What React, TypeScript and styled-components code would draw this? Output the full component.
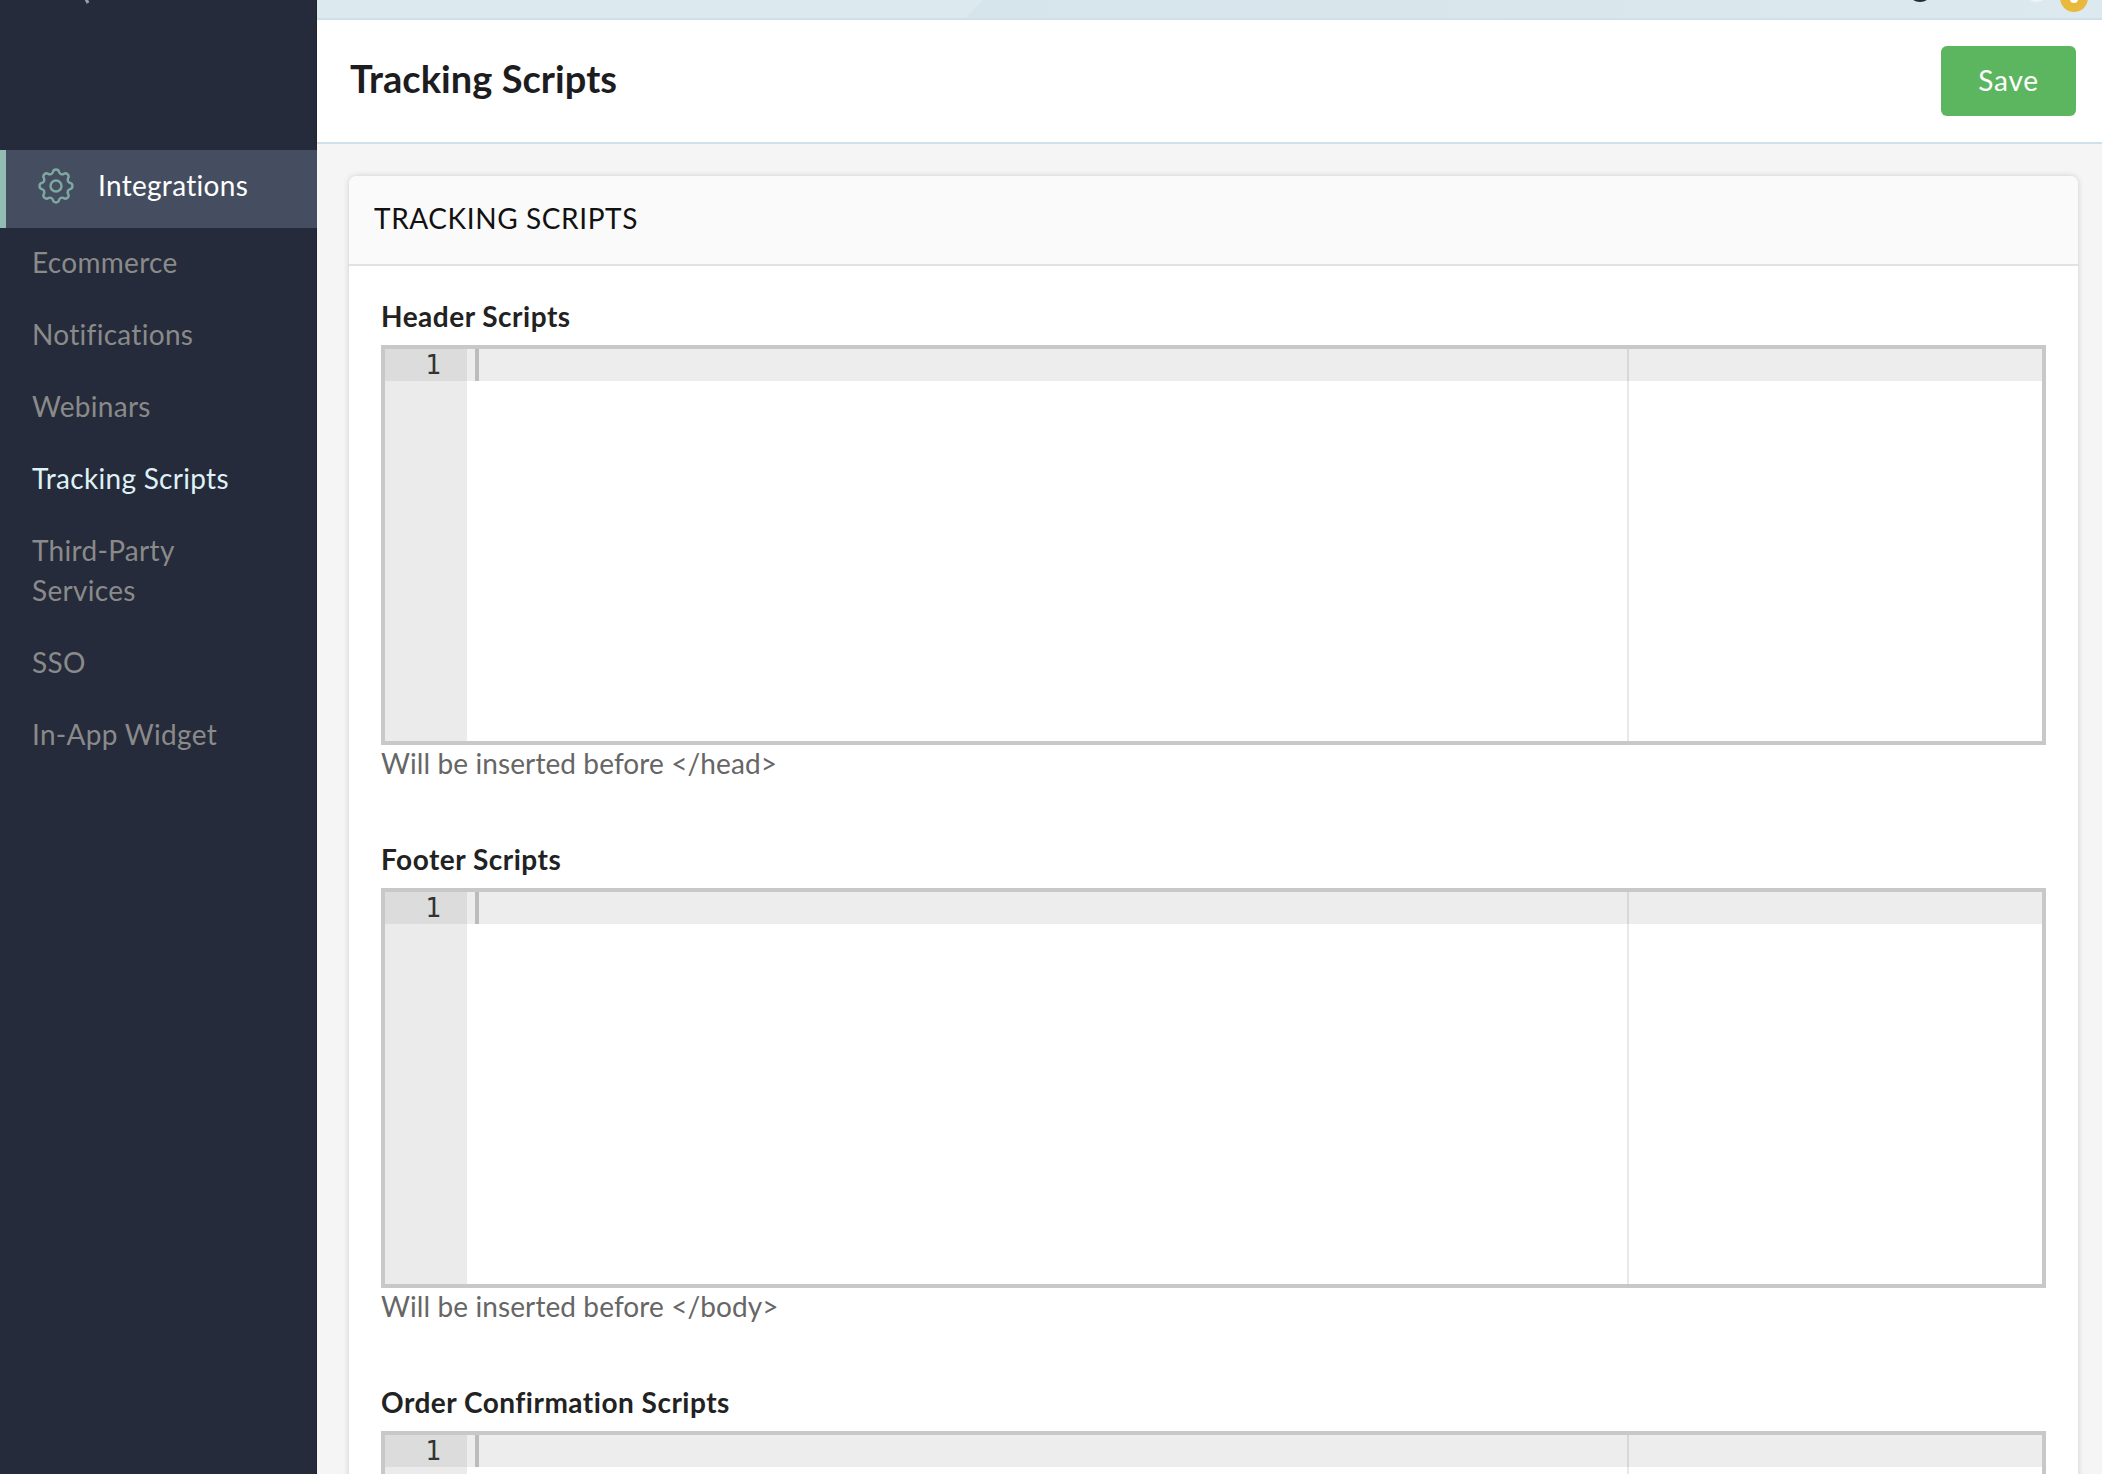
import React from 'react';
import styled, { createGlobalStyle } from 'styled-components';
import { HiOutlineCog } from 'react-icons/hi';

const Global = createGlobalStyle`
  html, body { margin: 0; padding: 0; height: 100%; overflow: hidden; background: #f5f5f5; }
  * { box-sizing: border-box; }
  body { font-family: Lato, "Open Sans", sans-serif; font-variant-ligatures: none; }
`;

const Shell = styled.div`
  display: flex;
  width: 2102px;
  height: 1474px;
  overflow: hidden;
`;

const Sidebar = styled.aside`
  flex: 0 0 317px;
  background: #252b3a;
  border-right: 1px solid #1f2431;
  display: flex;
  flex-direction: column;
  position: relative;
`;

const SidebarTopGlyph = styled.div`
  height: 150px;
  display: flex;
  padding-left: 80px;
  overflow: hidden;
  align-items: flex-start;
  svg { margin-top: -15px; display: block; }
`;

const ActiveItem = styled.div`
  display: flex;
  align-items: center;
  height: 78px;
  background: #454e60;
  border-left: 6px solid #93bdb2;
  padding: 0 0 9px 28px;
  color: #fff;
  font-size: 28px;
  letter-spacing: 0.3px;
  gap: 20px;
  margin-right: -0.5px;
  svg { width: 44px; height: 44px; color: #7fa9a0; stroke-width: 1.3; flex: none; margin-top: 3px; }
`;

const NavItem = styled.div<{ $current?: boolean }>`
  padding: 14px 32px 18px;
  line-height: 40px;
  font-size: 28px;
  letter-spacing: 0.3px;
  color: ${p => (p.$current ? '#dff0f6' : '#8a8a8a')};
`;

const Main = styled.main`
  flex: 1;
  min-width: 0;
  display: flex;
  flex-direction: column;
`;

const TopBar = styled.div`
  height: 20px;
  flex: none;
  background: #dce9ef;
  border-bottom: 2px solid #d0dfe8;
  position: relative;
  overflow: hidden;
  &::before {
    content: '';
    position: absolute;
    inset: 0;
    background: linear-gradient(to right, #d3e4ea 0%, #d6e5eb 40%, #dce9ef 100%);
    clip-path: polygon(666px 0, 100% 0, 100% 100%, 649px 100%);
  }
`;

const Avatar = styled.span`
  position: absolute;
  left: 1590px;
  top: -24px;
  width: 26px;
  height: 26px;
  border-radius: 50%;
  background: #252b3a;
`;

const WhiteDisc = styled.span`
  position: absolute;
  left: 1706px;
  top: -28px;
  width: 27px;
  height: 30px;
  border-radius: 50%;
  background: #eef3f6;
`;

const Badge = styled.span`
  position: absolute;
  left: 1743px;
  top: -16px;
  width: 28px;
  height: 28px;
  border-radius: 50%;
  background: #e9b93e;
  &::after {
    content: '';
    position: absolute;
    left: 10px;
    top: 11px;
    width: 8px;
    height: 8px;
    border-radius: 50%;
    background: #fff;
  }
`;

const PageHeader = styled.header`
  height: 124px;
  flex: none;
  background: #fff;
  border-bottom: 2px solid #d0e0ea;
  display: flex;
  align-items: center;
  justify-content: space-between;
  padding: 0 26px 0 33px;
`;

const PageTitle = styled.h1`
  margin: 0;
  padding-bottom: 6px;
  font-size: 38px;
  font-weight: 700;
  letter-spacing: 0.05px;
  color: #1d1d1f;
`;

const SaveButton = styled.button`
  width: 135px;
  height: 70px;
  border: none;
  border-radius: 6px;
  background: #5cb660;
  color: #fff;
  font: 400 28px Lato, sans-serif;
  letter-spacing: 0.7px;
  padding: 0 0 2px;
`;

const Content = styled.div`
  flex: 1;
  min-height: 0;
  padding: 32px 24px 0 32px;
`;

const Card = styled.section`
  background: #fff;
  border-radius: 8px;
  box-shadow: 0 0 6px rgba(0, 0, 0, 0.16);
`;

const CardHead = styled.div`
  height: 90px;
  background: #fafafa;
  border-bottom: 2px solid #e0e3e6;
  border-radius: 8px 8px 0 0;
  padding: 0 25px 4px;
  display: flex;
  align-items: center;
  font-size: 28px;
  letter-spacing: 0.6px;
  color: #111;
`;

const CardBody = styled.div`
  padding: 30px 32px 0;
`;

const Field = styled.div`
  margin-bottom: 58px;
`;

const Label = styled.label`
  display: block;
  font-size: 28px;
  letter-spacing: 0.5px;
  line-height: 40px;
  font-weight: 700;
  color: #222;
  margin-bottom: 9px;
`;

const Editor = styled.div`
  height: 400px;
  border: 4px solid #c8c8c8;
  display: flex;
  background: #fff;
  position: relative;
`;

const Gutter = styled.div`
  width: 82px;
  flex: none;
  background: #ebebeb;
`;

const GutterCell = styled.div`
  height: 32px;
  background: #dcdcdc;
  color: #333;
  font: 400 26px/32px "DejaVu Sans Mono", monospace;
  text-align: right;
  padding-right: 26px;
`;

const Surface = styled.div`
  flex: 1;
  min-width: 0;
  position: relative;
`;

const ActiveLine = styled.div`
  height: 32px;
  background: #ededed;
  padding-left: 8px;
`;

const Cursor = styled.div`
  width: 4px;
  height: 32px;
  background: #bcbcbc;
`;

const PrintMargin = styled.div`
  position: absolute;
  left: 1160px;
  top: 0;
  bottom: 0;
  width: 2px;
  background: rgba(0, 0, 0, 0.09);
`;

const Help = styled.div`
  font-size: 28px;
  letter-spacing: 0.1px;
  line-height: 36px;
  color: #666;
`;

const navItems = ['Ecommerce', 'Notifications', 'Webinars', 'Tracking Scripts', 'Third-Party Services', 'SSO', 'In-App Widget'];
const fields = [
  { label: 'Header Scripts', help: 'Will be inserted before </head>' },
  { label: 'Footer Scripts', help: 'Will be inserted before </body>' },
  { label: 'Order Confirmation Scripts', help: '' },
];

export default function App() {
  return (
    <Shell>
      <Global />
      <Sidebar>
        <SidebarTopGlyph>
          <svg width="12" height="20" viewBox="0 0 12 20"><path d="M3 8 L8 18" stroke="#9a9ea6" strokeWidth="3" fill="none" /></svg>
        </SidebarTopGlyph>
        <ActiveItem><HiOutlineCog />Integrations</ActiveItem>
        {navItems.map(n => (
          <NavItem key={n} $current={n === 'Tracking Scripts'}>
            {n === 'Third-Party Services' ? <>Third-Party<br />Services</> : n}
          </NavItem>
        ))}
      </Sidebar>
      <Main>
        <TopBar>
          <Avatar />
          <WhiteDisc />
          <Badge />
        </TopBar>
        <PageHeader>
          <PageTitle>Tracking Scripts</PageTitle>
          <SaveButton>Save</SaveButton>
        </PageHeader>
        <Content>
          <Card>
            <CardHead>TRACKING SCRIPTS</CardHead>
            <CardBody>
              {fields.map(f => (
                <Field key={f.label}>
                  <Label>{f.label}</Label>
                  <Editor>
                    <Gutter><GutterCell>1</GutterCell></Gutter>
                    <Surface>
                      <ActiveLine><Cursor /></ActiveLine>
                      <PrintMargin />
                    </Surface>
                  </Editor>
                  {f.help && <Help>{f.help}</Help>}
                </Field>
              ))}
            </CardBody>
          </Card>
        </Content>
      </Main>
    </Shell>
  );
}
